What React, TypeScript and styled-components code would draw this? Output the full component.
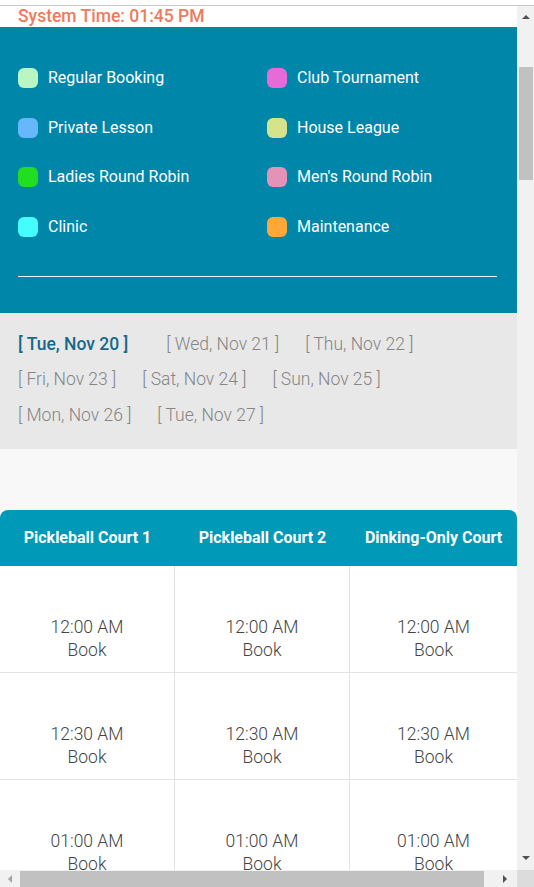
import styled, { createGlobalStyle } from 'styled-components';

const GlobalStyle = createGlobalStyle`
  html, body {
    margin: 0;
    padding: 0;
    background: #ffffff;
    font-family: Roboto, 'Liberation Sans', sans-serif;
    overflow: hidden;
  }
`;

const Shell = styled.div`
  height: 887px;
  display: flex;
  flex-direction: column;
`;

const TopStrip = styled.div`
  height: 5px;
  border-bottom: 1px solid #c9c9c9;
  background: #ffffff;
`;

const Frame = styled.div`
  flex: 1;
  min-height: 0;
  display: grid;
  grid-template-columns: 1fr 17px;
  grid-template-rows: 1fr 17px;
`;

const Viewport = styled.div`
  overflow: hidden;
  background: #f8f8f8;
`;

const ScrollTrack = styled.div<{ $vertical?: boolean }>`
  background: #f1f1f1;
  display: flex;
  flex-direction: ${(p) => (p.$vertical ? 'column' : 'row')};
  align-items: stretch;
`;

const ArrowButton = styled.div<{ $end?: boolean; $vertical?: boolean }>`
  flex: 0 0 17px;
  display: flex;
  align-items: center;
  justify-content: center;
  margin-left: ${(p) => (p.$end && !p.$vertical ? 'auto' : '0')};
  margin-top: ${(p) => (p.$end && p.$vertical ? 'auto' : '0')};
`;

const Thumb = styled.div<{ $vertical?: boolean }>`
  background: #c1c1c1;
  margin: ${(p) => (p.$vertical ? '0 1px 0 2px' : '1px 0 0 0')};
`;

const Corner = styled.div`
  background: #dcdcdc;
`;

const Page = styled.div`
  width: 100%;
`;

const TopBar = styled.div`
  background: #ffffff;
  padding: 0 18px;
  height: 21px;
`;

const SystemTime = styled.div`
  color: #f07a5c;
  font-size: 17.5px;
  font-weight: 500;
  line-height: 20px;
`;

const LegendPanel = styled.div`
  background: #0086a9;
  padding: 41px 20px 36px 18px;
`;

const LegendGrid = styled.div`
  display: grid;
  grid-template-columns: 249px 1fr;
  row-gap: 29.6px;
  padding-bottom: 39px;
  border-bottom: 1px solid #e6f3f7;
`;

const LegendItem = styled.div`
  display: flex;
  align-items: center;
  gap: 10px;
  color: #ffffff;
  font-size: 16px;
  line-height: 20px;
`;

const Swatch = styled.span<{ $color: string }>`
  width: 20px;
  height: 20px;
  border-radius: 6px;
  background: ${(p) => p.$color};
  flex-shrink: 0;
`;

const DatePanel = styled.div`
  background: #e8e8e8;
  padding: 20px 18px 22px;
  display: flex;
  flex-wrap: wrap;
  column-gap: 26px;
  row-gap: 12.5px;
`;

const DateLink = styled.a<{ $active?: boolean }>`
  font-size: 17.5px;
  line-height: 23px;
  font-weight: ${(p) => (p.$active ? 500 : 300)};
  color: ${(p) => (p.$active ? '#17698c' : '#858585')};
  margin-right: ${(p) => (p.$active ? '12px' : '0')};
  text-decoration: none;
  white-space: nowrap;
`;

const Spacer = styled.div`
  height: 61px;
`;

const Grid = styled.div`
  display: grid;
  grid-template-columns: 175px 175px 1fr;
  background: #ffffff;
`;

const HeadCell = styled.div<{ $first?: boolean; $last?: boolean }>`
  background: #009ab8;
  color: #ffffff;
  font-weight: 700;
  font-size: 16px;
  height: 56px;
  display: flex;
  align-items: center;
  justify-content: center;
  white-space: nowrap;
  border-top-left-radius: ${(p) => (p.$first ? '8px' : '0')};
  border-top-right-radius: ${(p) => (p.$last ? '8px' : '0')};
`;

const SlotCell = styled.div<{ $last?: boolean }>`
  border-bottom: 1px solid #e3e3e3;
  border-right: ${(p) => (p.$last ? 'none' : '1px solid #e3e3e3')};
  padding: 50px 0 10px;
  text-align: center;
  color: #444444;
  font-size: 17.5px;
  font-weight: 300;
  line-height: 23px;
`;

const SlotTime = styled.div``;

const BookLink = styled.div`
  cursor: pointer;
`;

const Arrow = ({ dir, color }: { dir: 'up' | 'down' | 'left' | 'right'; color: string }) => {
  const pts = {
    up: '0,6 4,2 8,6',
    down: '0,2 4,6 8,2',
    left: '6,0 2,4 6,8',
    right: '2,0 6,4 2,8',
  }[dir];
  return (
    <svg width="8" height="8" viewBox="0 0 8 8">
      <polygon points={pts} fill={color} />
    </svg>
  );
};

const legend = [
  { label: 'Regular Booking', color: '#b9f6c4' },
  { label: 'Club Tournament', color: '#e66ad8' },
  { label: 'Private Lesson', color: '#66b8fb' },
  { label: 'House League', color: '#d6e38b' },
  { label: 'Ladies Round Robin', color: '#21de21' },
  { label: "Men's Round Robin", color: '#e493b7' },
  { label: 'Clinic', color: '#46fdfd' },
  { label: 'Maintenance', color: '#ffa839' },
];

const dates = [
  'Tue, Nov 20',
  'Wed, Nov 21',
  'Thu, Nov 22',
  'Fri, Nov 23',
  'Sat, Nov 24',
  'Sun, Nov 25',
  'Mon, Nov 26',
  'Tue, Nov 27',
];

const courts = ['Pickleball Court 1', 'Pickleball Court 2', 'Dinking-Only Court'];

const slots = ['12:00 AM', '12:30 AM', '01:00 AM'];

const App = () => {
  return (
    <Shell>
      <GlobalStyle />
      <TopStrip />
      <Frame>
        <Viewport>
          <Page>
            <TopBar>
              <SystemTime>System Time: 01:45 PM</SystemTime>
            </TopBar>
            <LegendPanel>
              <LegendGrid>
                {legend.map((item) => (
                  <LegendItem key={item.label}>
                    <Swatch $color={item.color} />
                    {item.label}
                  </LegendItem>
                ))}
              </LegendGrid>
            </LegendPanel>
            <DatePanel>
              {dates.map((d, i) => (
                <DateLink key={d} href="#" $active={i === 0}>
                  [ {d} ]
                </DateLink>
              ))}
            </DatePanel>
            <Spacer />
            <Grid>
              {courts.map((c, i) => (
                <HeadCell key={c} $first={i === 0} $last={i === courts.length - 1}>
                  {c}
                </HeadCell>
              ))}
              {slots.map((s) =>
                courts.map((c, i) => (
                  <SlotCell key={s + c} $last={i === courts.length - 1}>
                    <SlotTime>{s}</SlotTime>
                    <BookLink>Book</BookLink>
                  </SlotCell>
                ))
              )}
            </Grid>
          </Page>
        </Viewport>
        <ScrollTrack $vertical>
          <ArrowButton style={{ flexBasis: 22 }}>
            <Arrow dir="up" color="#505050" />
          </ArrowButton>
          <Thumb $vertical style={{ marginTop: 39, height: 113 }} />
          <ArrowButton $end $vertical style={{ flexBasis: 24 }}>
            <Arrow dir="down" color="#505050" />
          </ArrowButton>
        </ScrollTrack>
        <ScrollTrack>
          <ArrowButton style={{ flexBasis: 20 }}>
            <Arrow dir="left" color="#a3a3a3" />
          </ArrowButton>
          <Thumb style={{ width: 464 }} />
          <ArrowButton $end style={{ flexBasis: 25 }}>
            <Arrow dir="right" color="#505050" />
          </ArrowButton>
        </ScrollTrack>
        <Corner />
      </Frame>
    </Shell>
  );
};

export default App;
